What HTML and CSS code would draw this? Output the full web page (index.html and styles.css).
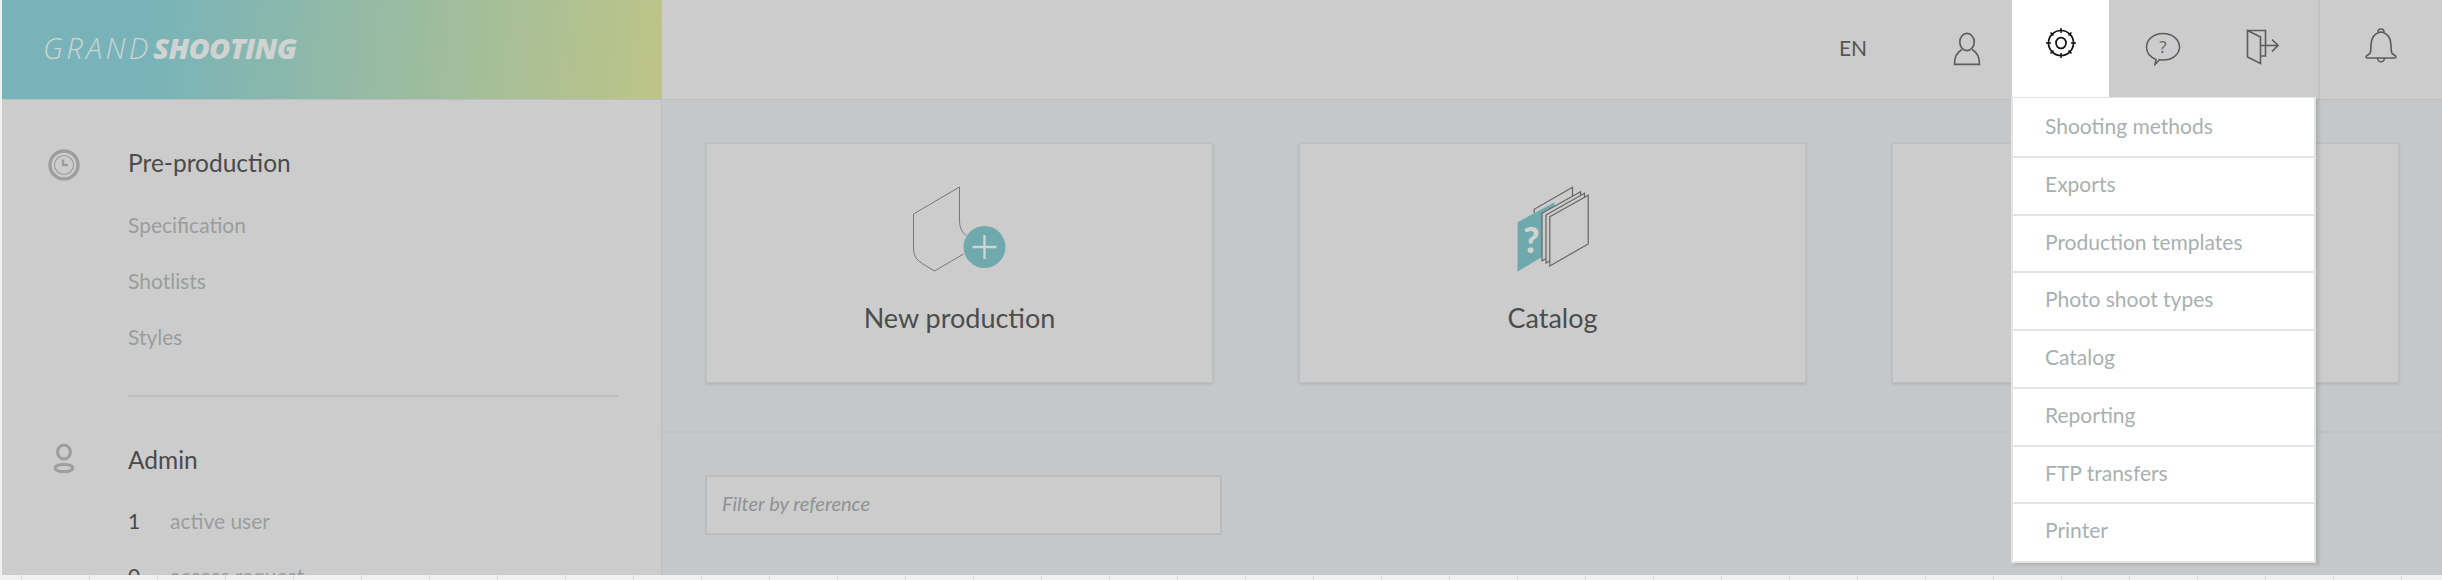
FILE: index.html
```html
<!DOCTYPE html>
<html lang="en">
<head>
<meta charset="utf-8">
<title>Grand Shooting</title>
<link rel="stylesheet" href="styles.css">
</head>
<body>
<div class="app">
  <aside class="side">
    <div class="logo"><span class="logo-thin">GRAND</span><span class="logo-bold">SHOOTING</span></div>
    <nav class="side-nav">
      <section class="group group-first">
        <svg class="group-icon" viewBox="0 0 32 32" width="32" height="32"><circle cx="16" cy="16" r="14" fill="none" stroke="#9c9e9e" stroke-width="3.4"/><circle cx="16" cy="16" r="9.5" fill="none" stroke="#9c9e9e" stroke-width="1.2"/><path d="M15 10.5v5.5h5" fill="none" stroke="#9c9e9e" stroke-width="2.4"/></svg>
        <h2 class="group-title">Pre-production</h2>
        <a class="side-link">Specification</a>
        <a class="side-link">Shotlists</a>
        <a class="side-link">Styles</a>
      </section>
      <section class="group group-admin">
        <svg class="group-icon" viewBox="0 0 22 30" width="22" height="30"><ellipse cx="11" cy="9" rx="6.4" ry="7" fill="none" stroke="#9c9e9e" stroke-width="3"/><ellipse cx="11" cy="25" rx="8.8" ry="3.6" fill="none" stroke="#9c9e9e" stroke-width="3"/></svg>
        <h2 class="group-title">Admin</h2>
        <div class="stat"><span class="stat-num">1</span><span class="stat-label">active user</span></div>
        <div class="stat"><span class="stat-num">0</span><span class="stat-label">access request</span></div>
      </section>
    </nav>
  </aside>
  <div class="content">
    <header class="top">
      <div class="top-cell cell-lang">EN</div>
      <div class="top-cell cell-user">
        <svg viewBox="0 0 28 34" width="28" height="34"><ellipse cx="14" cy="10" rx="7.2" ry="8.6" fill="none" stroke="#5c5c5c" stroke-width="1.6"/><path d="M9 17.5C4 20 1.5 26 1.5 32.4h25C26.500 26 24 20 19 17.500" fill="none" stroke="#5c5c5c" stroke-width="1.6"/></svg>
      </div>
      <div class="top-cell cell-gear">
        <svg viewBox="0 0 32 32" width="32" height="32"><circle cx="16" cy="16" r="12.5" fill="none" stroke="#111" stroke-width="1.7"/><ellipse cx="16" cy="16" rx="5" ry="5.400" fill="none" stroke="#111" stroke-width="1.700"/><path d="M16 1v5M16 26v5M1 16h5M26 16h5M5.500 5.500l3 3M26.500 5.500l-3 3M5.500 26.500l3-3M26.500 26.500l-3-3" stroke="#111" stroke-width="1.500"/></svg>
      </div>
      <div class="top-cell cell-help">
        <svg viewBox="0 0 36 34" width="36" height="34"><path d="M11 27.500C5 25 1.500 20.500 1.500 15 1.500 7.500 9 1.500 18 1.500S34.500 7.500 34.500 15 27 28 18 28c-1.500 0-2.500 0-3.500-.3L10 32.500z" fill="none" stroke="#5c5c5c" stroke-width="1.500"/><text class="help-mark" x="18" y="21" text-anchor="middle">?</text></svg>
      </div>
      <div class="top-cell cell-exit">
        <svg viewBox="0 0 34 36" width="34" height="36"><path d="M1.500 1.500h18V27h-5M1.500 1.500V28l13 6.500V8z" fill="none" stroke="#5c5c5c" stroke-width="1.600"/><path d="M14.500 16.500H32M26 10.500l6 6-6 6" fill="none" stroke="#5c5c5c" stroke-width="1.600"/></svg>
      </div>
      <div class="top-cell cell-bell">
        <svg viewBox="0 0 34 36" width="34" height="36"><path d="M2 30c0-2 4-2 4.500-5 1-5-1.500-18 10.500-20 12 2 9.500 15 10.500 20 .5 3 4.500 3 4.500 5 0 .8-.6 1-1.500 1h-27C2.600 31 2 30.800 2 30z" fill="none" stroke="#5c5c5c" stroke-width="1.600"/><path d="M14 5c0-4 6-4 6 0M13.500 31c.5 5 6.500 5 7 0" fill="none" stroke="#5c5c5c" stroke-width="1.500"/></svg>
      </div>
    </header>
    <section class="cards">
      <a class="card">
        <svg class="card-icon" viewBox="0 0 100 90" width="100" height="90"><path d="M56.500 53C52 49 49.500 45 49.500 37V4L3.500 31V65C3.500 78 12 80 24.500 88L53.500 71" fill="none" stroke="#777" stroke-width="1"/><circle cx="74.500" cy="64" r="21" fill="#70a9ad"/><path d="M74.500 52v24M62.500 64h24" stroke="#cfd4d3" stroke-width="2.400"/></svg>
        <span class="card-label">New production</span>
      </a>
      <a class="card">
        <svg class="card-icon" viewBox="0 0 100 90" width="100" height="90"><path d="M31.200 30V26.300L69.500 4.300V14" fill="none" stroke="#666" stroke-width="1.200"/><path d="M14.500 39.300 51.500 19.300V60L39 74 14.500 88.700z" fill="#70a9ad"/><text class="catalog-mark" x="20" y="70">?</text><path d="M39 30.300 77.500 8.700V58L39 77.700z" fill="#ccc" stroke="#666" stroke-width="1.200"/><path d="M43 32 81.500 10.300V60L43 80z" fill="#ccc" stroke="#666" stroke-width="1.200"/><path d="M46.800 33.700 85.200 12.300V61L46.800 83z" fill="#ccc" stroke="#666" stroke-width="1.200"/></svg>
        <span class="card-label">Catalog</span>
      </a>
      <a class="card"></a>
    </section>
    <section class="filters">
      <div class="filter-input">Filter by reference</div>
    </section>
  </div>
  <ul class="menu">
    <li class="menu-item">Shooting methods</li>
    <li class="menu-item">Exports</li>
    <li class="menu-item">Production templates</li>
    <li class="menu-item">Photo shoot types</li>
    <li class="menu-item">Catalog</li>
    <li class="menu-item">Reporting</li>
    <li class="menu-item">FTP transfers</li>
    <li class="menu-item">Printer</li>
  </ul>
</div>
<div class="page-foot"></div>
</body>
</html>
```

FILE: styles.css
```css
* { box-sizing: border-box; }
html, body { margin: 0; height: 580px; overflow: hidden; }
body { background: #f0f0f0; font-family: Lato, "Noto Sans", sans-serif; color: #4a4a4a; }

.app {
  position: relative;
  display: grid;
  grid-template-columns: 660px 1fr;
  height: 575px;
  margin-left: 2px;
  overflow: hidden;
  background: #c6c7c9;
}

/* Sidebar */
.side { background: #cccccc; border-right: 1px solid #bcbdbe; overflow: hidden; }
.logo {
  height: 100px;
  padding: 30px 0 0 41px;
  margin-right: -1px;
  border-bottom: 1px solid #bcbdbe;
  background: linear-gradient(96deg, #78b3b9 22%, #bdc488 100%);
  font-family: "Open Sans", sans-serif;
  font-style: italic;
  font-size: 29px;
  line-height: 36px;
  color: #cfd3d2;
  white-space: nowrap;
}
.logo-thin { font-weight: 300; letter-spacing: 3.4px; }
.logo-bold { font-weight: 800; margin-left: 1.5px; letter-spacing: -.7px; }

.side-nav { padding: 0 42px 0 126px; }
.group { position: relative; }
.group-first { padding: 47px 0 44px; border-bottom: 2px solid #bdbebe; }
.group-admin { padding-top: 47px; }
.group-icon { position: absolute; left: -80px; top: 49px; }
.group-admin .group-icon { left: -75px; top: 46px; }
.group-title { margin: 0 0 32px; font-size: 24.5px; line-height: 32px; font-weight: 400; color: #4a4a4a; }
.group-admin .group-title { margin-bottom: 31px; }
.side-link { display: block; font-size: 21px; line-height: 28px; margin-bottom: 28px; color: #9a9d9d; }
.side-link:last-child { margin-bottom: 0; }
.stat { display: flex; font-size: 21px; line-height: 28px; margin-bottom: 27px; }
.stat-num { width: 42px; color: #4a4a4a; }
.stat-label { color: #9a9d9d; }

/* Top bar */
.content { display: flex; flex-direction: column; min-width: 0; }
.top {
  display: flex;
  justify-content: flex-end;
  height: 100px;
  background: #cccccc;
  border-bottom: 1px solid #bcbdbe;
}
.top-cell { display: flex; align-items: center; justify-content: center; height: 97px; }
.cell-lang { width: 100px; margin-right: 17px; padding-bottom: 3px; font-size: 21px; color: #555; }
.cell-user { width: 92px; padding-left: 2px; }
.cell-gear { width: 97px; background: #fff; padding-bottom: 11px; }
.cell-help { width: 108px; }
.cell-exit { width: 91px; padding-bottom: 4px; }
.cell-bell { width: 124px; margin-left: 10px; border-left: 2px solid #c2c2c2; height: 99px; padding-bottom: 9px; }
.help-mark { font-family: "Noto Sans", sans-serif; font-size: 17px; fill: #6c6c6c; }

/* Cards */
.cards {
  display: grid;
  grid-template-columns: repeat(3, 1fr);
  gap: 86px;
  padding: 43px 43px 48px 44px;
  border-bottom: 2px solid #bfc0c1;
}
.card {
  display: flex;
  flex-direction: column;
  align-items: center;
  height: 240px;
  padding-top: 39px;
  background: #cccccc;
  border: 1px solid #bdbebe;
  box-shadow: 0 1px 3px rgba(0, 0, 0, .12);
}
.card-icon { display: block; }
.card-label { margin-top: 28px; font-size: 27px; line-height: 34px; color: #4c4c4c; }
.catalog-mark { font-family: Lato, sans-serif; font-weight: 900; font-size: 36px; fill: #cfd4d3; }

/* Filter */
.filters { padding: 42px 0 0 43px; }
.filter-input {
  width: 517px;
  height: 60px;
  padding: 0 15px;
  border: 2px solid #bbbcbd;
  background: #cccccc;
  font-size: 20px;
  font-style: italic;
  line-height: 52px;
  color: #8f9292;
}

/* Dropdown */
.menu {
  position: absolute;
  top: 97px;
  left: 2009px;
  width: 305px;
  margin: 0;
  padding: 2px 0 0;
  list-style: none;
  background: #fff;
  border: 2px solid #e4e4e4;
  border-top-width: 1px;
  box-shadow: 3px 2px 3px rgba(0, 0, 0, .12);
}
.menu-item {
  height: 57.75px;
  padding: 0 0 0 32px;
  font-size: 21px;
  line-height: 51px;
  color: #a8b0b2;
  border-bottom: 2px solid #e4e4e4;
}
.menu-item:last-child { height: 57px; border-bottom: 0; }

/* Bottom strip */
.page-foot {
  height: 5px;
  background: repeating-linear-gradient(90deg, #dcdcdc 0 1px, transparent 1px 68px) 21px 0 repeat-y, #f0f0f0;
  background-size: 2448px 100%;
}
```
